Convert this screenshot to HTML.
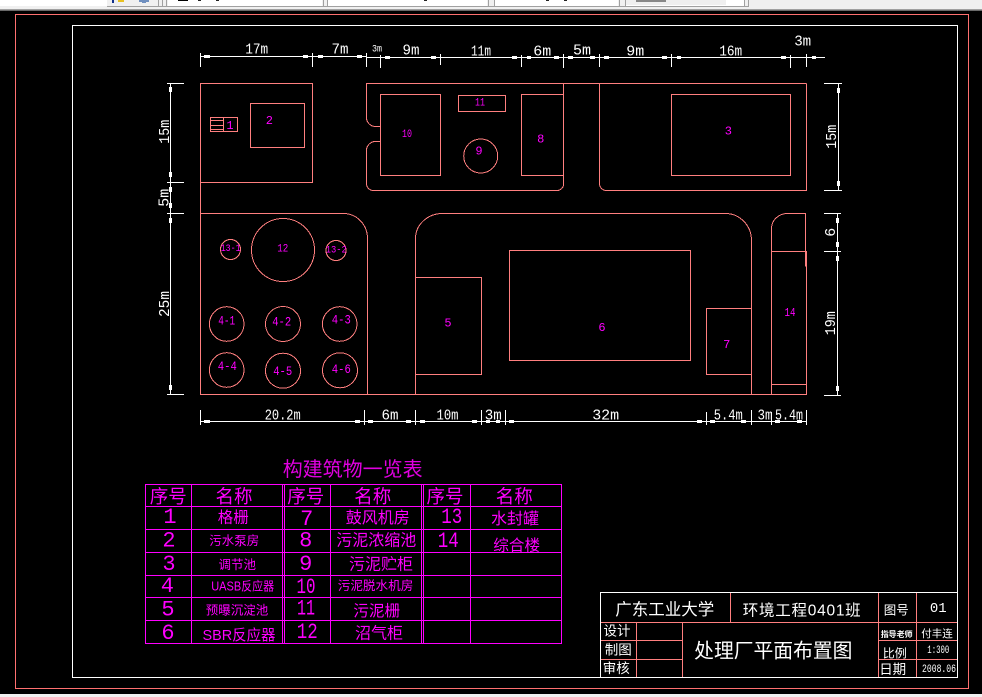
<!DOCTYPE html>
<html><head><meta charset="utf-8"><style>
html,body{margin:0;padding:0;background:#000;width:982px;height:697px;overflow:hidden}
svg{display:block}
.l{stroke:#ff7f7f;stroke-width:1;fill:none;shape-rendering:crispEdges}
.w{stroke:#fff;stroke-width:1;fill:none;shape-rendering:crispEdges}
.m{stroke:#ff00ff;stroke-width:1;fill:none;shape-rendering:crispEdges}
text{font-family:"Liberation Sans","Noto Sans CJK SC",sans-serif;text-anchor:middle;dominant-baseline:central}
.tm text,text.tm{fill:#ff00ff}
.tw text{fill:#fff}
text.mono,.mono text{font-family:"Liberation Mono","Noto Sans CJK SC",monospace}
.a rect{fill:#fff;shape-rendering:crispEdges}
</style></head><body>
<svg width="982" height="697" viewBox="0 0 982 697" xmlns="http://www.w3.org/2000/svg">
<rect width="982" height="697" fill="#000"/>
<rect x="0" y="0" width="982" height="9" fill="#f0f0f0"/>
<rect x="0" y="9" width="982" height="1" fill="#a0a0a0"/>
<rect x="0" y="10" width="982" height="1" fill="#696969"/>
<rect x="0" y="0" width="107" height="6" fill="#fff"/>
<rect x="107" y="6" width="642" height="1" fill="#a0a0a0"/>
<rect x="168" y="0" width="154" height="6" fill="#fff"/>
<rect x="328" y="0" width="159" height="6" fill="#fff"/>
<rect x="495" y="0" width="123" height="6" fill="#fff"/>
<rect x="626" y="0" width="118" height="6" fill="#fff"/>
<rect x="626" y="0" width="100" height="5" fill="#efefef"/>
<rect x="744" y="0" width="1" height="7" fill="#a0a0a0"/>
<rect x="748" y="0" width="1" height="7" fill="#a0a0a0"/>
<rect x="158" y="0" width="1" height="7" fill="#a0a0a0"/><rect x="162" y="0" width="1" height="7" fill="#a0a0a0"/><rect x="166" y="0" width="1" height="7" fill="#a0a0a0"/>
<rect x="323" y="0" width="1" height="7" fill="#a0a0a0"/><rect x="327" y="0" width="1" height="7" fill="#a0a0a0"/>
<rect x="488" y="0" width="1" height="7" fill="#a0a0a0"/><rect x="494" y="0" width="1" height="7" fill="#a0a0a0"/>
<rect x="619" y="0" width="1" height="7" fill="#a0a0a0"/><rect x="625" y="0" width="1" height="7" fill="#a0a0a0"/>
<rect x="112" y="0" width="2" height="3" fill="#10308a"/><rect x="118" y="0" width="6" height="2" fill="#e8c020"/>
<rect x="139" y="0" width="10" height="2" fill="#7090c0"/><rect x="142" y="2" width="4" height="1" fill="#7090c0"/>
<rect x="178" y="0" width="10" height="1" fill="#000"/><rect x="198" y="0" width="3" height="1" fill="#222"/><rect x="216" y="0" width="3" height="1" fill="#222"/>
<rect x="424" y="0" width="3" height="1" fill="#222"/><rect x="546" y="0" width="3" height="1" fill="#222"/><rect x="564" y="0" width="3" height="1" fill="#222"/>
<rect x="636" y="0" width="30" height="2" fill="#888"/>
<rect x="0" y="694" width="982" height="3" fill="#f0f0f0"/>

<rect x="15.5" y="14.5" width="953" height="674" fill="none" stroke="#ff7070" stroke-width="1.4" shape-rendering="crispEdges"/>
<rect class="w" x="72.5" y="25.5" width="885" height="652"/>

<!-- plan -->
<g class="l">
<rect x="200.5" y="83.5" width="112" height="99"/>
<path d="M200.5 182.5V394.5H806.5"/>
<rect x="210.5" y="117.5" width="27" height="14"/>
<path d="M223.5 117.5V131.5M210.5 120.5H223.5M210.5 125.5H223.5M210.5 129.5H223.5"/>
<rect x="250.5" y="103.5" width="54" height="44"/>
<rect x="380.5" y="94.5" width="60" height="81"/>
<path d="M806.5 83.5H366.5V118A9 9 0 0 0 375 126.5H380.5M380.5 141.5H375A9 9 0 0 0 366.5 150V183A7 7 0 0 0 373.5 190.5H557A6.500 6.500 0 0 0 563.500 183V83.5"/>
<rect x="458.5" y="95.5" width="47" height="16"/>
<circle cx="480.700" cy="156" r="17"/>
<rect x="521.500" y="94.5" width="42" height="81"/>
<path d="M599.500 83.5V183A7 7 0 0 0 606.500 190.500H806.500V83.500"/>
<rect x="671.500" y="94.500" width="119" height="81"/>
<path d="M200.500 213.500H343.500A24 25 0 0 1 367.500 238.500V394.500"/>
<path d="M415.500 394.500V238.500A27 25 0 0 1 443 213.500H725.500A26 27 0 0 1 751.500 240V394.500"/>
<path d="M771.500 394.500V228A16 15 0 0 1 787.500 213.500H805.500V266.500"/>
<rect x="771.500" y="251.500" width="35" height="143"/>
<path d="M771.500 384.500H806.500"/>
<rect x="415.500" y="277.500" width="66" height="97"/>
<rect x="509.500" y="250.500" width="181" height="110"/>
<path d="M751.500 308.500H706.500V374.500H751.500"/>
<circle cx="230.500" cy="249.500" r="10"/>
<circle cx="283" cy="250" r="31.500"/>
<circle cx="336" cy="250.500" r="10"/>
<circle cx="226.700" cy="324" r="17.300"/>
<circle cx="283" cy="324" r="17.500"/>
<circle cx="339.700" cy="324" r="17.300"/>
<circle cx="226.700" cy="370" r="17.300"/>
<circle cx="283" cy="370.700" r="17.500"/>
<circle cx="340" cy="370.300" r="17.500"/>
</g>

<!-- dimension lines -->
<g class="w">
<path d="M200.500 56.500H366.500M366.500 57.500H825"/>
<path d="M200.500 53V67M312.500 53V67M366.500 53V67M380.500 55V68M440.500 54V65M521.500 55V67M563.500 54V68M599.500 54V67M671.500 54V67M790.500 55V68M806.500 54V67"/>
<path d="M170.500 83V394M167 83.500H184M167 182.500H184M167 213.500H184M167 394.500H184"/>
<path d="M838.500 83V190M824 83.500H842M824 190.500H842"/>
<path d="M837.500 213V395M824 213.500H841M824 251.500H841M824 395.500H841"/>
<path d="M200 421.500H806M200.500 410V425M364.500 410V425M415.500 410V425M481.500 410V425M505.500 410V425M706.500 412V425M751.500 410V425M771.500 412V425M806.500 410V425"/>
</g>
<g class="a">
<rect x="204" y="55" width="6" height="3"/><rect x="303" y="55" width="5" height="3"/><rect x="318" y="55" width="5" height="3"/><rect x="357" y="55" width="5" height="3"/>
<rect x="385" y="56" width="5" height="3"/><rect x="431" y="56" width="5" height="3"/><rect x="512" y="56" width="5" height="3"/><rect x="527" y="56" width="4" height="3"/>
<rect x="554" y="56" width="5" height="3"/><rect x="568" y="56" width="5" height="3"/><rect x="590" y="56" width="5" height="3"/><rect x="604" y="56" width="5" height="3"/>
<rect x="662" y="56" width="5" height="3"/><rect x="677" y="56" width="4" height="3"/><rect x="781" y="56" width="5" height="3"/><rect x="812" y="56" width="4" height="3"/>
<rect x="169" y="87" width="3" height="5"/><rect x="169" y="172" width="3" height="5"/><rect x="169" y="187" width="3" height="5"/><rect x="169" y="203" width="3" height="5"/><rect x="169" y="218" width="3" height="5"/><rect x="169" y="385" width="3" height="5"/>
<rect x="837" y="88" width="3" height="5"/><rect x="837" y="181" width="3" height="5"/>
<rect x="836" y="218" width="3" height="5"/><rect x="836" y="242" width="3" height="5"/><rect x="836" y="256" width="3" height="5"/><rect x="836" y="386" width="3" height="5"/>
<rect x="204" y="420" width="6" height="3"/><rect x="355" y="420" width="5" height="3"/><rect x="368" y="420" width="5" height="3"/><rect x="406" y="420" width="5" height="3"/>
<rect x="420" y="420" width="5" height="3"/><rect x="472" y="420" width="5" height="3"/><rect x="486" y="420" width="4" height="3"/><rect x="496" y="420" width="4" height="3"/>
<rect x="509" y="420" width="5" height="3"/><rect x="697" y="420" width="5" height="3"/><rect x="710" y="420" width="5" height="3"/><rect x="741" y="420" width="5" height="3"/>
<rect x="775" y="420" width="5" height="3"/><rect x="797" y="420" width="5" height="3"/>
</g>
<g class="tw mono" font-size="15">
<text x="256.700" y="50" textLength="23" lengthAdjust="spacingAndGlyphs">17m</text>
<text x="340" y="50" textLength="17" lengthAdjust="spacingAndGlyphs">7m</text>
<text x="377" y="50" font-size="10" textLength="10" lengthAdjust="spacingAndGlyphs">3m</text>
<text x="411" y="51" textLength="17" lengthAdjust="spacingAndGlyphs">9m</text>
<text x="481" y="52" textLength="20" lengthAdjust="spacingAndGlyphs">11m</text>
<text x="542.300" y="52" textLength="18" lengthAdjust="spacingAndGlyphs">6m</text>
<text x="582" y="51" textLength="18" lengthAdjust="spacingAndGlyphs">5m</text>
<text x="635.300" y="52" textLength="18" lengthAdjust="spacingAndGlyphs">9m</text>
<text x="730.700" y="52" textLength="23" lengthAdjust="spacingAndGlyphs">16m</text>
<text x="802.700" y="42" textLength="17" lengthAdjust="spacingAndGlyphs">3m</text>
<text transform="translate(165.300 131.700) rotate(-90)" textLength="24" lengthAdjust="spacingAndGlyphs">15m</text>
<text transform="translate(165 197.700) rotate(-90)" textLength="18" lengthAdjust="spacingAndGlyphs">5m</text>
<text transform="translate(165.300 304) rotate(-90)" textLength="26" lengthAdjust="spacingAndGlyphs">25m</text>
<text transform="translate(832.300 136.700) rotate(-90)" textLength="24" lengthAdjust="spacingAndGlyphs">15m</text>
<text transform="translate(831.700 232.300) rotate(-90)">6</text>
<text transform="translate(831.700 323.300) rotate(-90)" textLength="24" lengthAdjust="spacingAndGlyphs">19m</text>
<text x="282.700" y="416" textLength="36" lengthAdjust="spacingAndGlyphs">20.2m</text>
<text x="390" y="416" textLength="17" lengthAdjust="spacingAndGlyphs">6m</text>
<text x="447.500" y="416" textLength="22" lengthAdjust="spacingAndGlyphs">10m</text>
<text x="493.300" y="416" textLength="17" lengthAdjust="spacingAndGlyphs">3m</text>
<text x="605.700" y="416" textLength="27" lengthAdjust="spacingAndGlyphs">32m</text>
<text x="728.300" y="416" textLength="29" lengthAdjust="spacingAndGlyphs">5.4m</text>
<text x="765" y="416" textLength="15" lengthAdjust="spacingAndGlyphs">3m</text>
<text x="789" y="416" textLength="28" lengthAdjust="spacingAndGlyphs">5.4m</text>
</g>

<!-- plan labels -->
<g class="tm mono" font-size="11">
<text x="230" y="126" font-size="12">1</text>
<text x="269.300" y="121" font-size="12">2</text>
<text x="407" y="135" textLength="10" lengthAdjust="spacingAndGlyphs">10</text>
<text x="480" y="103.500" textLength="10" lengthAdjust="spacingAndGlyphs">11</text>
<text x="479" y="151.700" font-size="12">9</text>
<text x="540.700" y="139.300" font-size="12">8</text>
<text x="728.300" y="131.700" font-size="12">3</text>
<text x="230.700" y="249.700" font-size="10" textLength="20" lengthAdjust="spacingAndGlyphs">13-1</text>
<text x="282.700" y="249.700" textLength="11" lengthAdjust="spacingAndGlyphs">12</text>
<text x="336.300" y="251" font-size="10" textLength="21" lengthAdjust="spacingAndGlyphs">13-2</text>
<g font-size="13">
<text x="226.700" y="321" textLength="17" lengthAdjust="spacingAndGlyphs">4-1</text>
<text x="281.700" y="322" textLength="19" lengthAdjust="spacingAndGlyphs">4-2</text>
<text x="341.300" y="320" textLength="19" lengthAdjust="spacingAndGlyphs">4-3</text>
<text x="227.300" y="366.300" textLength="19" lengthAdjust="spacingAndGlyphs">4-4</text>
<text x="282.700" y="371.300" textLength="19" lengthAdjust="spacingAndGlyphs">4-5</text>
<text x="341.300" y="369.700" textLength="19" lengthAdjust="spacingAndGlyphs">4-6</text>
<text x="448" y="323.300" font-size="12">5</text>
<text x="602" y="328" font-size="12">6</text>
<text x="726.700" y="345" font-size="12">7</text>
<text x="790" y="313" font-size="12" textLength="11" lengthAdjust="spacingAndGlyphs">14</text>
</g>
</g>

<!-- table -->
<text class="tm" x="352.700" y="470" font-size="20" style="fill:#e000e0">构建筑物一览表</text>
<g class="m">
<rect x="145.500" y="484.500" width="416" height="159"/>
<path d="M145.500 506.500H561.500M145.500 529.500H561.500M145.500 552.500H561.500M145.500 575.500H561.500M145.500 597.500H561.500M145.500 620.500H561.500"/>
<path d="M191.500 484.500V643.500M282.500 484.500V643.500M284.500 484.500V643.500M330.500 484.500V643.500M421.500 484.500V643.500M423.500 484.500V643.500M470.500 484.500V643.500"/>
</g>
<g class="tm">
<g font-size="18.500" style="fill:#f000f0">
<text x="168.300" y="496.500">序号</text><text x="234" y="496.500">名称</text>
<text x="305.700" y="496.500">序号</text><text x="372.700" y="496.500">名称</text>
<text x="445" y="496.500">序号</text><text x="514.300" y="496.500">名称</text>
</g>
<g font-size="22" class="mono">
<text x="170" y="517.300">1</text><text x="169" y="541">2</text><text x="169" y="564.300">3</text><text x="167.300" y="586.700">4</text><text x="168" y="610">5</text><text x="168" y="633.300">6</text>
<text x="306.700" y="519.300">7</text><text x="305.700" y="541">8</text><text x="305.700" y="564.300">9</text>
<text x="306" y="587.300" textLength="19" lengthAdjust="spacingAndGlyphs">10</text><text x="306" y="609" textLength="18" lengthAdjust="spacingAndGlyphs">11</text><text x="307.300" y="632.700" textLength="21" lengthAdjust="spacingAndGlyphs">12</text>
<text x="451.700" y="517.300" textLength="21" lengthAdjust="spacingAndGlyphs">13</text><text x="448.300" y="541.700" textLength="21" lengthAdjust="spacingAndGlyphs">14</text>
</g>
<text x="233.300" y="518" font-size="15.500">格栅</text>
<text x="234.300" y="541" font-size="12.500">污水泵房</text>
<text x="237.300" y="565" font-size="12.500">调节池</text>
<text x="242.700" y="586.700" font-size="12.500" textLength="63" lengthAdjust="spacingAndGlyphs">UASB反应器</text>
<text x="237" y="610.700" font-size="12.500">预曝沉淀池</text>
<text x="239" y="635.700" font-size="15" textLength="73" lengthAdjust="spacingAndGlyphs">SBR反应器</text>
<text x="377.700" y="518.500" font-size="16">鼓风机房</text>
<text x="376.300" y="541" font-size="16">污泥浓缩池</text>
<text x="381" y="565" font-size="16">污泥贮柜</text>
<text x="375.500" y="586" font-size="12.600">污泥脱水机房</text>
<text x="376.700" y="611.700" font-size="15.600">污泥栅</text>
<text x="379" y="634" font-size="16">沼气柜</text>
<text x="515" y="519.300" font-size="16">水封罐</text>
<text x="516.700" y="546" font-size="15.600">综合楼</text>
</g>

<!-- title block -->
<g class="l">
<path d="M600.500 622.500H957M730.500 592.500V622.500M878.500 592.500V677M916.500 592.500V677M636.500 622.500V677M682.500 622.500V677M600.500 640.500H682.500M600.500 659.500H682.500M878.500 640.500H957M878.500 659.500H957"/>
</g>
<path class="w" d="M600.500 677.500V592.500H957.500M600.500 677.500H957.500"/>
<g class="tw">
<text x="664.700" y="610" font-size="16.500">广东工业大学</text>
<text x="801.700" y="611" font-size="15.500" textLength="118" lengthAdjust="spacing">环境工程0401班</text>
<text x="896.300" y="610.700" font-size="12.500">图号</text>
<text x="938.300" y="609" font-size="14" class="mono">01</text>
<text x="617" y="631" font-size="13.500">设计</text>
<text x="618.300" y="650" font-size="13.500">制图</text>
<text x="616.300" y="668.300" font-size="13.500">审核</text>
<text x="773.300" y="651.700" font-size="19.800">处理厂平面布置图</text>
<text x="896.700" y="634.300" font-size="8" font-weight="bold">指导老师</text>
<text x="937" y="634" font-size="10.500">付丰连</text>
<text x="894.700" y="653.300" font-size="12">比例</text>
<text x="938.300" y="651" font-size="11" class="mono" textLength="22" lengthAdjust="spacingAndGlyphs">1:300</text>
<text x="892.700" y="669.300" font-size="13.500">日期</text>
<text x="939" y="670" font-size="11" class="mono" textLength="34" lengthAdjust="spacingAndGlyphs">2008.06</text>
</g>
</svg>
</body></html>
